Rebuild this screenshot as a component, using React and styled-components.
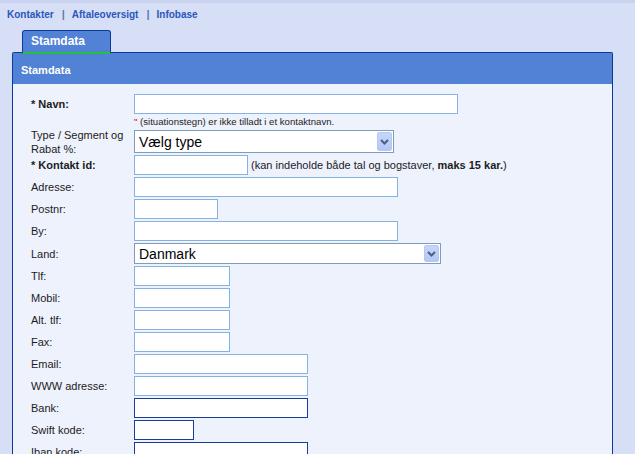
import React from "react";
import styled, {createGlobalStyle} from "styled-components";

const GlobalStyle = createGlobalStyle`
    body{
        margin:0;
        background:#d6dff5;
        font-family:"Liberation Sans", Arial, sans-serif;
    }
`

const fields = [
    {label: "Adresse:", width: 264},
    {label: "Postnr:", width: 84},
    {label: "By:", width: 264},
    {label: "Land:", select: "Danmark", width: 307},
    {label: "Tlf:", width: 96},
    {label: "Mobil:", width: 96},
    {label: "Alt. tlf:", width: 96},
    {label: "Fax:", width: 96},
    {label: "Email:", width: 174},
    {label: "WWW adresse:", width: 174},
    {label: "Bank:", width: 174, dark: true},
    {label: "Swift kode:", width: 60, dark: true},
    {label: "Iban kode:", width: 174, dark: true},
];

const Arrow = () => (
    <ArrowButton>
        <svg width="9" height="6" viewBox="0 0 9 6">
            <path d="M1 1 L4.5 4.5 L8 1" fill="none" stroke="#4a5f88" strokeWidth="2"/>
        </svg>
    </ArrowButton>
)

const Select = ({value, width, height}) => (
    <SelectBox $width={width} $height={height}>
        <SelectValue>{value}</SelectValue>
        <Arrow />
    </SelectBox>
)

const App = () => {
    return(
        <>
        <GlobalStyle />
        <Page>
            <Nav>
                <NavLink>Kontakter</NavLink>
                <Pipe>|</Pipe>
                <NavLink>Aftaleoversigt</NavLink>
                <Pipe>|</Pipe>
                <NavLink>Infobase</NavLink>
            </Nav>
            <TabRow>
                <Tab>Stamdata</Tab>
            </TabRow>
            <Panel>
                <PanelHeader>Stamdata</PanelHeader>
                <PanelBody>
                    <Form>
                        <Label $bold>* Navn:</Label>
                        <Cell><Input $width={324} /></Cell>

                        <span />
                        <Hint><Red>"</Red> (situationstegn) er ikke tilladt i et kontaktnavn.</Hint>

                        <TallLabel>Type / Segment og<br />Rabat %:</TallLabel>
                        <Cell><Select value="Vælg type" width={260} height={23} /></Cell>

                        <Label $bold>* Kontakt id:</Label>
                        <Cell>
                            <Input $width={114} />
                            <Note>(kan indeholde både tal og bogstaver, <b>maks 15 kar.</b>)</Note>
                        </Cell>

                        {fields.map(field => (
                            <React.Fragment key={field.label}>
                                <Label>{field.label}</Label>
                                <Cell>
                                    {field.select
                                        ? <Select value={field.select} width={field.width} height={21} />
                                        : <Input $width={field.width} $dark={field.dark} />}
                                </Cell>
                            </React.Fragment>
                        ))}
                    </Form>
                </PanelBody>
            </Panel>
        </Page>
        </>
    )
};

const Page = styled.div`
    border-top:3px solid #c9d3ef;
    height:451px;
    overflow:hidden;
`
const Nav = styled.div`
    display:flex;
    align-items:center;
    height:22px;
    padding-left:7px;
    font-size:10px;
    font-weight:bold;
`
const NavLink = styled.a`
    color:#2a56be;
    cursor:pointer;
`
const Pipe = styled.span`
    color:#5f7ab8;
    margin:0 7px 0 8px;
    font-size:11px;
`
const TabRow = styled.div`
    display:flex;
    padding-left:22px;
    margin-top:5px;
`
const Tab = styled.div`
    position:relative;
    z-index:1;
    box-sizing:border-box;
    width:89px;
    height:24px;
    margin-bottom:-2px;
    padding:3px 0 0 8px;
    background:#5282d5;
    border:1px solid #0b3a9e;
    border-bottom:2px solid #25c13a;
    border-radius:3px 3px 0 0;
    color:#fff;
    font-size:12px;
    font-weight:bold;
`
const Panel = styled.div`
    margin-left:12px;
    width:601px;
    box-sizing:border-box;
    border:1px solid #0b3a9e;
    border-bottom:none;
    border-radius:2px 2px 0 0;
`
const PanelHeader = styled.div`
    display:flex;
    align-items:center;
    height:31px;
    padding:2px 0 0 8px;
    box-sizing:border-box;
    background:#5282d5;
    color:#fff;
    font-size:11px;
    font-weight:bold;
`
const PanelBody = styled.div`
    background:#eef2fd;
    padding:10px 0 40px 18px;
`
const Form = styled.div`
    display:grid;
    grid-template-columns:103px 1fr;
    row-gap:2px;
    align-items:center;
`
const Label = styled.div`
    font-size:11px;
    color:#1c1c1c;
    font-weight:${props => props.$bold ? "bold" : "normal"};
`
const TallLabel = styled(Label)`
    line-height:14px;
    margin:-3px 0;
`
const Cell = styled.div`
    display:flex;
    align-items:center;
`
const Input = styled.input`
    box-sizing:border-box;
    width:${props => props.$width}px;
    height:20px;
    margin:0;
    background:#fff;
    border:1px solid ${props => props.$dark ? "#173d94" : "#86b2e2"};
    outline:none;
`
const Hint = styled.div`
    height:12px;
    font-size:9.6px;
    line-height:12px;
    color:#222;
`
const Red = styled.span`
    color:#d40000;
`
const Note = styled.span`
    margin-left:3px;
    font-size:11px;
    color:#1c1c1c;
`
const SelectBox = styled.div`
    display:flex;
    align-items:center;
    box-sizing:border-box;
    width:${props => props.$width}px;
    height:${props => props.$height}px;
    padding:0 1px 0 4px;
    background:#fff;
    border:1px solid #7f9db9;
`
const SelectValue = styled.span`
    flex:1;
    font-size:14px;
    color:#000;
`
const ArrowButton = styled.span`
    display:flex;
    align-items:center;
    justify-content:center;
    width:15px;
    height:calc(100% - 2px);
    box-sizing:border-box;
    border:1px solid #b6c8f2;
    border-radius:2px;
    background:linear-gradient(#c6d6fb, #b4c7f5);
`

export default App
